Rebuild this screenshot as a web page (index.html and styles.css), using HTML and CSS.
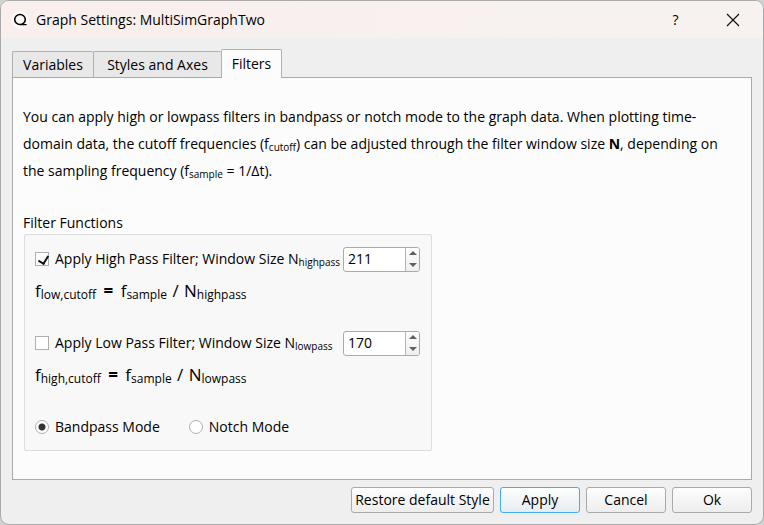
FILE: index.html
```html
<!DOCTYPE html>
<html lang="en">
<head>
<meta charset="utf-8">
<title>Graph Settings: MultiSimGraphTwo</title>
<link rel="stylesheet" href="styles.css">
</head>
<body>
<main class="dialog">
  <header class="titlebar">
    <svg class="logo" viewBox="0 0 18 18" aria-hidden="true"><circle cx="9" cy="9" r="9" fill="#fdf8f7"/><ellipse cx="9" cy="8.5" rx="5.3" ry="5" fill="none" stroke="#000" stroke-width="1.6"/><path d="M9 13.7H15.6" fill="none" stroke="#000" stroke-width="1.2"/></svg>
    <h1 class="title">Graph Settings: MultiSimGraphTwo</h1>
    <button class="window-button" type="button" aria-label="Help">?</button>
    <button class="window-button" type="button" aria-label="Close"><svg class="close" viewBox="0 0 14 14"><path d="M1 1L13 13M13 1L1 13" fill="none" stroke="#111" stroke-width="1.2"/></svg></button>
  </header>
  <div class="content">
    <nav class="tabs" role="tablist">
      <button class="tab" type="button" role="tab">Variables</button>
      <button class="tab" type="button" role="tab">Styles and Axes</button>
      <button class="tab tab-active" type="button" role="tab" aria-selected="true">Filters</button>
    </nav>
    <section class="panel">
      <p class="intro">You can apply high or lowpass filters in bandpass or notch mode to the graph data. When plotting time-domain data, the cutoff frequencies (f<sub>cutoff</sub>) can be adjusted through the filter window size <b>N</b>, depending on the sampling frequency (f<sub>sample</sub> = 1/Δt).</p>
      <h2 class="group-title">Filter Functions</h2>
      <div class="group">
        <div class="filter">
          <input class="check" type="checkbox" id="high" checked>
          <label class="filter-label" for="high">Apply High Pass Filter; Window Size N<sub>highpass</sub></label>
          <div class="spin">
            <input class="spin-value" type="number" value="211" aria-label="High pass window size">
            <div class="spin-buttons">
              <button class="step" type="button" aria-label="Increase"><svg class="arrow" viewBox="0 0 8 4"><path d="M0 4L4 0L8 4Z" fill="#606060"/></svg></button>
              <button class="step" type="button" aria-label="Decrease"><svg class="arrow" viewBox="0 0 8 4"><path d="M0 0L4 4L8 0Z" fill="#606060"/></svg></button>
            </div>
          </div>
        </div>
        <p class="formula">f<sub>low,cutoff</sub> <b class="equals">=</b> f<sub>sample</sub> <span class="slash">/</span> N<sub>highpass</sub></p>
        <div class="filter">
          <input class="check" type="checkbox" id="low">
          <label class="filter-label" for="low">Apply Low Pass Filter; Window Size N<sub>lowpass</sub></label>
          <div class="spin">
            <input class="spin-value" type="number" value="170" aria-label="Low pass window size">
            <div class="spin-buttons">
              <button class="step" type="button" aria-label="Increase"><svg class="arrow" viewBox="0 0 8 4"><path d="M0 4L4 0L8 4Z" fill="#606060"/></svg></button>
              <button class="step" type="button" aria-label="Decrease"><svg class="arrow" viewBox="0 0 8 4"><path d="M0 0L4 4L8 0Z" fill="#606060"/></svg></button>
            </div>
          </div>
        </div>
        <p class="formula">f<sub>high,cutoff</sub> <b class="equals">=</b> f<sub>sample</sub> <span class="slash">/</span> N<sub>lowpass</sub></p>
        <div class="modes">
          <div class="mode"><input class="radio" type="radio" name="mode" id="bandpass" checked><label for="bandpass">Bandpass Mode</label></div>
          <div class="mode"><input class="radio" type="radio" name="mode" id="notch"><label for="notch">Notch Mode</label></div>
        </div>
      </div>
    </section>
    <footer class="actions">
      <button class="button button-wide" type="button">Restore default Style</button>
      <button class="button button-default" type="button">Apply</button>
      <button class="button" type="button">Cancel</button>
      <button class="button" type="button">Ok</button>
    </footer>
  </div>
</main>
</body>
</html>
```
FILE: styles.css
```css
* { box-sizing: border-box; }

body {
  margin: 0;
  background: #d2d2d2;
  color: #000;
  font: 14px/26px "Open Sans", sans-serif;
}

button, input { font: inherit; color: inherit; margin: 0; }
h1, h2, p { margin: 0; font-weight: normal; }
sub { font-size: 10px; line-height: 0; vertical-align: -2px; }

.dialog {
  display: flex;
  flex-direction: column;
  min-height: 100vh;
  border: 1px solid #aaa;
  border-radius: 9px;
  background: #efefef;
  overflow: hidden;
}

.titlebar {
  display: flex;
  align-items: center;
  height: 37px;
  padding: 0 2px 0 10px;
  background: linear-gradient(90deg, #f9efed, #f7f2f0);
}

.logo { width: 18px; height: 18px; }
.title { flex: 1; padding-left: 7px; font-size: 14px; line-height: 20px; }

.window-button {
  display: flex;
  align-items: center;
  justify-content: center;
  width: 57px;
  height: 36px;
  padding: 0;
  border: 0;
  background: none;
}

.close { width: 14px; height: 14px; }

.content { flex: 1; display: flex; flex-direction: column; padding: 11px 11px; }

.tabs {
  display: grid;
  grid-template-columns: 81px 128px 61px;
  align-items: end;
}

.tab {
  height: 26px;
  padding: 0;
  border: 1px solid #b0b0b0;
  border-width: 1px 0 0 1px;
  border-radius: 2px 2px 0 0;
  background: #e8e8e8;
  line-height: 26px;
}

.tab-active {
  position: relative;
  height: 29px;
  margin-bottom: -1px;
  border-right-width: 1px;
  background: #fcfcfc;
}

.panel {
  flex: 1;
  padding: 25px 10px 10px;
  border: 1px solid #aaa;
  background: #fcfcfc;
}

.intro { line-height: 27px; }
.group-title { margin-top: 28px; font-size: 14px; line-height: 22px; }

.group {
  width: 408px;
  margin-left: 1px;
  padding: 11px 11px 10px 10px;
  border: 1px solid #dcdcdc;
  border-radius: 2px;
  background: #f8f8f8;
}

.filter { display: flex; align-items: center; }

.check, .radio {
  appearance: none;
  width: 14px;
  height: 14px;
  border: 1px solid #b0b0b0;
  background: #fff;
}

.check:checked::after {
  content: "";
  display: block;
  width: 5px;
  height: 8px;
  margin: 1px 0 0 4px;
  border: solid #111;
  border-width: 0 2px 2px 0;
  transform: rotate(32deg);
}

.radio { border-radius: 50%; }

.radio:checked { background: radial-gradient(circle, #333 3px, #fff 4px); }

.filter-label { flex: 1; padding-left: 6px; white-space: nowrap; }

.spin {
  display: flex;
  width: 77px;
  height: 25px;
  border: 1px solid #aaa;
  border-radius: 3px;
  background: #fff;
  overflow: hidden;
}

.spin-value {
  flex: 1;
  min-width: 0;
  padding: 0 4px;
  border: 0;
  background: none;
  appearance: textfield;
}

.spin-value::-webkit-inner-spin-button { appearance: none; margin: 0; }

.spin-buttons {
  display: flex;
  flex-direction: column;
  width: 14px;
  border-left: 1px solid #b4b4b4;
  background: linear-gradient(#fefefe, #efefef);
}

.step {
  flex: 1;
  display: flex;
  align-items: center;
  justify-content: center;
  padding: 0;
  border: 0;
  background: none;
}

.arrow { width: 8px; height: 4px; }

.formula { margin: 4px 0 24px; font-size: 17px; line-height: 30px; }
.formula sub { font-size: 12px; }
.equals { margin: 0 3px; }
.slash { margin: 0 1px; }

.modes { display: flex; gap: 29px; }
.mode { display: flex; align-items: center; gap: 6px; }

.actions { display: flex; justify-content: flex-end; gap: 6px; margin-top: 7px; }

.button {
  width: 80px;
  height: 26px;
  padding: 0;
  border: 1px solid #aaa;
  border-radius: 3px;
  background: linear-gradient(#fefefe, #ededed);
  line-height: 24px;
  white-space: nowrap;
}

.button-wide { width: 143px; }
.button-default { border-color: #45a9f5; background: linear-gradient(#fdfefe, #e5ecf1); }
```
